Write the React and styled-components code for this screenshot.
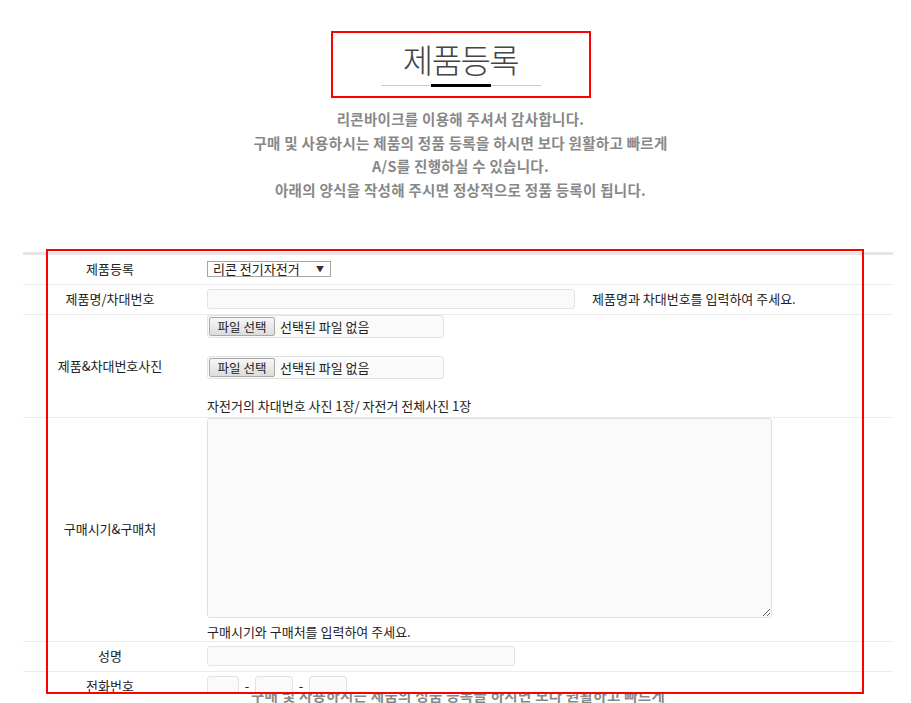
import React from 'react'
import styled, { createGlobalStyle } from 'styled-components'

const Global = createGlobalStyle`
  html, body {
    margin: 0;
    padding: 0;
    background: #fff;
    font-family: "Noto Sans CJK KR", "Noto Sans", sans-serif;
    overflow: hidden;
  }
`

const Page = styled.div`
  width: 911px;
  height: 703px;
  overflow: hidden;
`

const Header = styled.header`
  display: flex;
  flex-direction: column;
  align-items: center;
  padding: 31px 0 0 10px;
`

// red annotation box drawn round the title
const TitleFrame = styled.div`
  box-sizing: border-box;
  width: 260px;
  height: 67px;
  border: 2px solid #ff0000;
  display: flex;
  flex-direction: column;
  align-items: center;
`

const Title = styled.h1`
  margin: 6px 0 0;
  font-size: 33px;
  line-height: 40px;
  font-weight: 300;
  color: #444;
  letter-spacing: -1.5px;
`

const Divider = styled.div`
  width: 160px;
  height: 3px;
  margin-top: 5px;
  display: flex;
  justify-content: center;
  background: linear-gradient(#cccccc, #cccccc) center / 100% 1px no-repeat;
`

const DividerMark = styled.span`
  width: 60px;
  height: 3px;
  background: #000;
`

const Intro = styled.div`
  margin-top: 9px;
  text-align: center;
  font-size: 14.5px;
  line-height: 23.7px;
  font-weight: 700;
  letter-spacing: 0.3px;
  color: #888;
`

const FormArea = styled.div`
  position: relative;
  margin: 50px 18px 0 23px;
`

// red annotation box drawn over the form
const FormFrame = styled.div`
  position: absolute;
  top: -3px;
  left: 23px;
  width: 818px;
  height: 445px;
  box-sizing: border-box;
  border: 2px solid #ff0000;
  pointer-events: none;
  z-index: 2;
`

const Table = styled.div`
  border-top: 3px solid #e6e6e6;
`

const Row = styled.div`
  display: grid;
  grid-template-columns: 174px 1fr;
  column-gap: 10px;
  align-items: center;
  box-sizing: border-box;
  border-bottom: 1px solid #ebebeb;
  height: ${p => (p.h || 29) + 1}px;
  font-size: 13px;
  color: #222;
  background: #fff;
`

const LastRow = styled(Row)`
  align-items: start;
  border-bottom: none;
  overflow: hidden;
`

const Label = styled.div`
  text-align: center;
  line-height: 18px;
  padding-top: ${p => p.pt || 0}px;
`

const Cell = styled.div`
  display: flex;
  flex-direction: ${p => (p.column ? 'column' : 'row')};
  align-items: ${p => (p.column ? 'flex-start' : 'center')};
  padding: ${p => p.pad || '0'};
`

const SelectWrap = styled.div`
  display: flex;
  align-items: center;
  box-sizing: border-box;
  width: 124px;
  height: 16px;
  border: 1px solid #a6a6a6;
  background: #fff;
  padding: 0 6px 0 5px;
  justify-content: space-between;
  line-height: 14px;
`

const Arrow = styled.span`
  font-size: 8px;
  color: #333;
`

const TextInput = styled.input`
  box-sizing: border-box;
  width: ${p => p.w}px;
  height: 20px;
  margin: 0;
  padding: 0 4px;
  border: 1px solid #e2e2e2;
  border-radius: 3px;
  background: #fafafa;
  font: inherit;
  outline: none;
`

const Hint = styled.span`
  margin-left: 17px;
  line-height: 18px;
`

const FileBox = styled.div`
  box-sizing: border-box;
  width: 237px;
  height: 23px;
  display: flex;
  align-items: center;
  gap: 5px;
  padding-left: 1px;
  border: 1px solid #e2e2e2;
  border-radius: 3px;
  background: #fafafa;
  margin-bottom: ${p => p.mb || 0}px;
`

const FileButton = styled.button`
  box-sizing: border-box;
  height: 19px;
  width: 66px;
  padding: 0;
  border: 1px solid #a9a9a9;
  border-radius: 2px;
  background: linear-gradient(#f7f7f7, #dcdcdc);
  font: inherit;
  font-size: 12.5px;
  line-height: 17px;
  color: #222;
`

const Note = styled.div`
  line-height: 18px;
  margin-top: ${p => p.mt || 0}px;
`

const Memo = styled.textarea`
  display: block;
  box-sizing: border-box;
  width: 565px;
  height: 200px;
  margin: 0;
  border: 1px solid #e0e0e0;
  border-radius: 3px;
  background: #fafafa;
  font: inherit;
  outline: none;
`

const Dash = styled.span`
  width: 16px;
  text-align: center;
  line-height: 18px;
`

const Footnote = styled.div`
  height: 10px;
  overflow: hidden;
  background: #fff;
`

const FootnoteText = styled.div`
  margin-top: -10px;
  text-align: center;
  font-size: 14.5px;
  line-height: 24px;
  font-weight: 700;
  letter-spacing: 0.3px;
  color: #888;
`

export default function App() {
  return (
    <Page>
      <Global />
      <Header>
        <TitleFrame>
          <Title>제품등록</Title>
          <Divider>
            <DividerMark />
          </Divider>
        </TitleFrame>
        <Intro>
          리콘바이크를 이용해 주셔서 감사합니다.<br />
          구매 및 사용하시는 제품의 정품 등록을 하시면 보다 원활하고 빠르게<br />
          A/S를 진행하실 수 있습니다.<br />
          아래의 양식을 작성해 주시면 정상적으로 정품 등록이 됩니다.
        </Intro>
      </Header>

      <FormArea>
        <FormFrame />
        <Table>
          <Row>
            <Label>제품등록</Label>
            <Cell>
              <SelectWrap>
                <span>리콘 전기자전거</span>
                <Arrow>▼</Arrow>
              </SelectWrap>
            </Cell>
          </Row>
          <Row>
            <Label>제품명/차대번호</Label>
            <Cell>
              <TextInput w={368} />
              <Hint>제품명과 차대번호를 입력하여 주세요.</Hint>
            </Cell>
          </Row>
          <Row h={102}>
            <Label>제품&차대번호사진</Label>
            <Cell column pad="0 0 1px">
              <FileBox mb={18}>
                <FileButton>파일 선택</FileButton>
                <span>선택된 파일 없음</span>
              </FileBox>
              <FileBox>
                <FileButton>파일 선택</FileButton>
                <span>선택된 파일 없음</span>
              </FileBox>
              <Note mt={18}>자전거의 차대번호 사진 1장/ 자전거 전체사진 1장</Note>
            </Cell>
          </Row>
          <Row h={223}>
            <Label>구매시기&구매처</Label>
            <Cell column>
              <Memo />
              <Note mt={5}>구매시기와 구매처를 입력하여 주세요.</Note>
            </Cell>
          </Row>
          <Row>
            <Label>성명</Label>
            <Cell>
              <TextInput w={308} />
            </Cell>
          </Row>
          <LastRow h={20}>
            <Label pt={5}>전화번호</Label>
            <Cell pad="4px 0 0">
              <TextInput w={32} />
              <Dash>-</Dash>
              <TextInput w={38} />
              <Dash>-</Dash>
              <TextInput w={38} />
            </Cell>
          </LastRow>
        </Table>
        <Footnote>
          <FootnoteText>구매 및 사용하시는 제품의 정품 등록을 하시면 보다 원활하고 빠르게</FootnoteText>
        </Footnote>
      </FormArea>
    </Page>
  )
}
